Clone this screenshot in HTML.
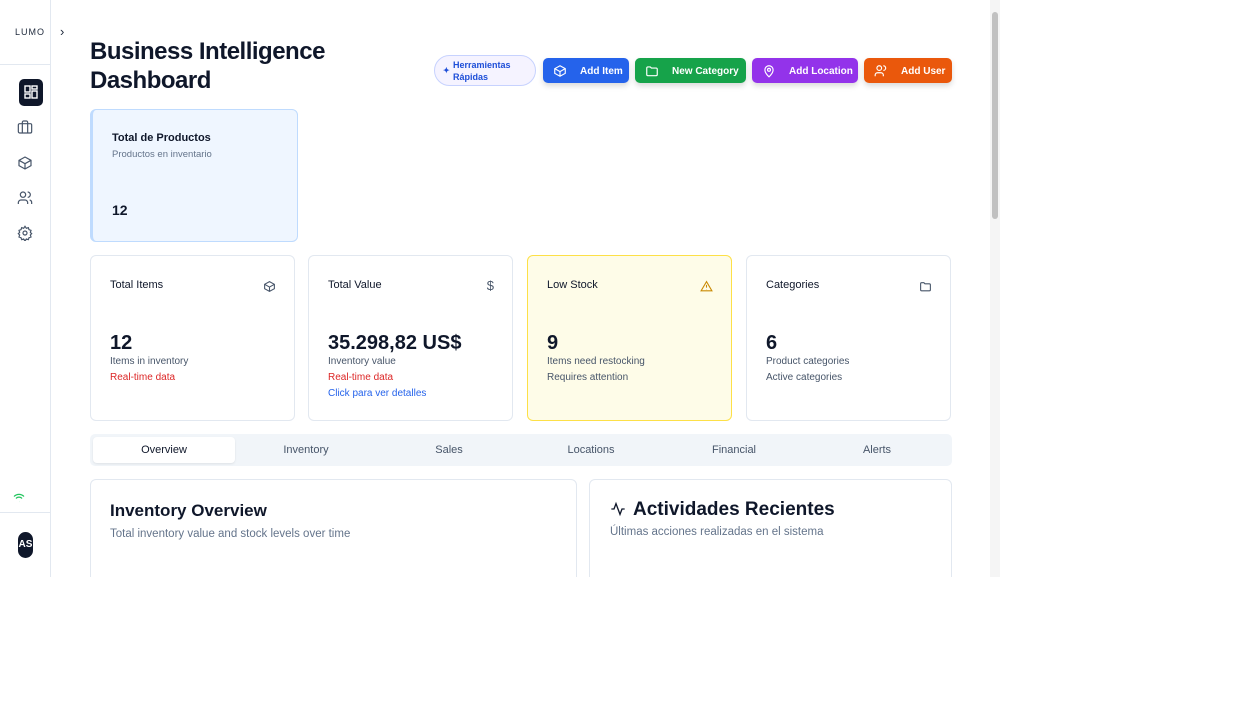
<!DOCTYPE html><html><head><style>
*{box-sizing:border-box;margin:0;padding:0}
body{width:1250px;height:721px;background:#fff;font-family:"Liberation Sans",sans-serif;position:relative;overflow:hidden;color:#0f172a}
.frame{position:absolute;left:0;top:0;width:1000px;height:577px;overflow:hidden;background:#fff}
.side{position:absolute;left:0;top:0;width:51px;height:577px;border-right:1px solid #e2e8f0}
.abs{position:absolute}
.btn{position:absolute;top:58px;height:25px;border-radius:5px;color:#fff;font-size:10px;font-weight:bold;display:flex;align-items:center;padding-top:1px;box-shadow:0 3px 6px rgba(0,0,0,.15)}
.btn svg{margin:0 13px 0 10px}
.card{position:absolute;top:255px;width:205px;height:166px;border:1px solid #e2e8f0;border-radius:6px;background:#fff}
.card .t{position:absolute;left:19px;top:23px;font-size:11px;color:#0f172a}
.card .v{position:absolute;left:19px;top:76px;font-size:20px;font-weight:bold}
.card .s{position:absolute;left:19px;font-size:10px;color:#475569}
.card .ic{position:absolute;right:18px;top:24px}
.tabs{position:absolute;left:90px;top:434px;width:862px;height:32px;background:#f1f5f9;border-radius:5px}
.tab{position:absolute;top:3px;width:142px;height:26px;font-size:11px;color:#475569;text-align:center;line-height:27px}
</style></head><body><div class="frame">
<div class="side">
<div class="abs" style="left:15px;top:27px;font-size:9px;letter-spacing:1px;color:#1e293b">LUMO</div>
<div class="abs" style="left:0;top:64px;width:51px;border-top:1px solid #e2e8f0"></div>
<div class="abs" style="left:19px;top:79px;width:24px;height:27px;background:#0f172a;border-radius:5px"><svg width="24" height="27" viewBox="0 0 24 27" fill="none" stroke="#fff" stroke-width="1.4"><rect x="6" y="7" width="5" height="6"/><rect x="13" y="7" width="5" height="3"/><rect x="13" y="12" width="5" height="7"/><rect x="6" y="15" width="5" height="4"/></svg></div>
<svg class="abs" style="left:17px;top:119px" width="16" height="16" viewBox="0 0 24 24" fill="none" stroke="#475569" stroke-width="1.8"><rect x="2" y="7" width="20" height="14" rx="2"/><path d="M16 21V5a2 2 0 0 0-2-2h-4a2 2 0 0 0-2 2v16"/></svg>
<svg class="abs" style="left:17px;top:155px" width="16" height="16" viewBox="0 0 24 24" fill="none" stroke="#475569" stroke-width="1.8"><path d="M21 8 12 3 3 8v8l9 5 9-5z M3 8l9 5 9-5 M12 13v8"/></svg>
<svg class="abs" style="left:17px;top:190px" width="16" height="16" viewBox="0 0 24 24" fill="none" stroke="#475569" stroke-width="1.8"><circle cx="9" cy="7" r="4"/><path d="M2 21v-2a4 4 0 0 1 4-4h6a4 4 0 0 1 4 4v2M16 3a4 4 0 0 1 0 8M22 21v-2a4 4 0 0 0-3-4"/></svg>
<svg class="abs" style="left:17px;top:225px" width="16" height="16" viewBox="0 0 24 24" fill="none" stroke="#475569" stroke-width="1.8"><circle cx="12" cy="12" r="3"/><path d="M12 2l2 3 3-1 1 3 3 1-1 3 2 2-2 2 1 3-3 1-1 3-3-1-2 3-2-3-3 1-1-3-3-1 1-3-2-2 2-2-1-3 3-1 1-3 3 1z"/></svg>
<svg class="abs" style="left:13px;top:493px" width="12" height="10" viewBox="0 0 12 10" fill="none" stroke="#22c55e" stroke-width="1.2"><path d="M1 3.5a7 7 0 0 1 10 0M3 5.5a4 4 0 0 1 6 0M6 8.5h.1"/></svg>
<div class="abs" style="left:0;top:512px;width:51px;border-top:1px solid #e2e8f0"></div>
<div class="abs" style="left:18px;top:532px;width:15px;height:26px;background:#0f172a;border-radius:8px;color:#fff;font-size:10px;font-weight:bold;line-height:26px;text-align:center">AS</div>
</div>
<div class="abs" style="left:60px;top:24px;font-size:13px;color:#1e293b">›</div>
<div class="abs" style="left:90px;top:37px;font-size:24px;font-weight:bold;line-height:29px;letter-spacing:-.5px">Business Intelligence<br>Dashboard</div>
<div class="abs" style="left:434px;top:55px;width:102px;height:31px;border:1px solid #c7d2fe;border-radius:16px;background:#f5f3ff;color:#1d4ed8;font-size:9px;font-weight:bold;line-height:12px;padding:3px 0 0 18px">Herramientas<br>Rápidas<span class="abs" style="left:8px;top:9px;font-size:8px">✦</span></div>
<div class="btn" style="left:543px;width:86px;background:#2563eb"><svg width="14" height="14" viewBox="0 0 24 24" fill="none" stroke="#fff" stroke-width="2"><path d="M21 8 12 3 3 8v8l9 5 9-5z M3 8l9 5 9-5 M12 13v8"/></svg>Add Item</div>
<div class="btn" style="left:635px;width:111px;background:#16a34a"><svg width="14" height="14" viewBox="0 0 24 24" fill="none" stroke="#fff" stroke-width="2"><path d="M3 7a2 2 0 0 1 2-2h4l2 2h8a2 2 0 0 1 2 2v9a2 2 0 0 1-2 2H5a2 2 0 0 1-2-2z"/></svg>New Category</div>
<div class="btn" style="left:752px;width:106px;background:#9333ea"><svg width="14" height="14" viewBox="0 0 24 24" fill="none" stroke="#fff" stroke-width="2"><path d="M12 22s7-6 7-12a7 7 0 0 0-14 0c0 6 7 12 7 12z"/><circle cx="12" cy="10" r="2.5"/></svg>Add Location</div>
<div class="btn" style="left:864px;width:88px;background:#ea580c"><svg width="14" height="14" viewBox="0 0 24 24" fill="none" stroke="#fff" stroke-width="2"><circle cx="9" cy="7" r="4"/><path d="M2 21v-2a4 4 0 0 1 4-4h6a4 4 0 0 1 4 4v2M16 3a4 4 0 0 1 0 8"/></svg>Add User</div>
<div class="abs" style="left:90px;top:109px;width:208px;height:133px;background:#eff6ff;border:1px solid #bfdbfe;border-left:3px solid #bfdbfe;border-radius:6px">
<div class="abs" style="left:19px;top:22px;font-size:11px;font-weight:bold">Total de Productos</div>
<div class="abs" style="left:19px;top:39px;font-size:9.5px;color:#64748b">Productos en inventario</div>
<div class="abs" style="left:19px;top:92px;font-size:14px;font-weight:bold">12</div></div>
<div class="card" style="left:90px"><div class="t">Total Items</div><svg class="ic" width="13" height="13" viewBox="0 0 24 24" fill="none" stroke="#475569" stroke-width="2"><path d="M21 8 12 3 3 8v8l9 5 9-5z M3 8l9 5 9-5 M12 13v8"/></svg><div class="v">12</div><div class="s" style="top:100px">Items in inventory</div><div class="s" style="top:116px;color:#dc2626">Real-time data</div></div>
<div class="card" style="left:308px"><div class="t">Total Value</div><div class="ic" style="font-size:13px;color:#475569;top:22px">$</div><div class="v">35.298,82 US$</div><div class="s" style="top:100px">Inventory value</div><div class="s" style="top:116px;color:#dc2626">Real-time data</div><div class="s" style="top:132px;color:#2563eb">Click para ver detalles</div></div>
<div class="card" style="left:527px;background:#fefce8;border-color:#fde047"><div class="t">Low Stock</div><svg class="ic" width="13" height="13" viewBox="0 0 24 24" fill="none" stroke="#ca8a04" stroke-width="2"><path d="M12 3 2 20h20z M12 9v5 M12 17v.5"/></svg><div class="v">9</div><div class="s" style="top:100px">Items need restocking</div><div class="s" style="top:116px">Requires attention</div></div>
<div class="card" style="left:746px"><div class="t">Categories</div><svg class="ic" width="13" height="13" viewBox="0 0 24 24" fill="none" stroke="#475569" stroke-width="2"><path d="M3 7a2 2 0 0 1 2-2h4l2 2h8a2 2 0 0 1 2 2v9a2 2 0 0 1-2 2H5a2 2 0 0 1-2-2z"/></svg><div class="v">6</div><div class="s" style="top:100px">Product categories</div><div class="s" style="top:116px">Active categories</div></div>
<div class="tabs"><div class="tab" style="left:3px;background:#fff;border-radius:4px;color:#0f172a;box-shadow:0 1px 2px rgba(0,0,0,.08)">Overview</div><div class="tab" style="left:145px">Inventory</div><div class="tab" style="left:288px">Sales</div><div class="tab" style="left:430px">Locations</div><div class="tab" style="left:573px">Financial</div><div class="tab" style="left:716px">Alerts</div></div>
<div class="abs" style="left:90px;top:479px;width:487px;height:120px;border:1px solid #e2e8f0;border-radius:6px"><div class="abs" style="left:19px;top:21px;font-size:17px;font-weight:bold">Inventory Overview</div><div class="abs" style="left:19px;top:48px;font-size:11.5px;color:#64748b">Total inventory value and stock levels over time</div></div>
<div class="abs" style="left:589px;top:479px;width:363px;height:120px;border:1px solid #e2e8f0;border-radius:6px"><svg class="abs" style="left:20px;top:21px" width="16" height="16" viewBox="0 0 24 24" fill="none" stroke="#0f172a" stroke-width="2"><path d="M22 12h-4l-3 8L9 4l-3 8H2"/></svg><div class="abs" style="left:43px;top:19px;font-size:19px;font-weight:bold">Actividades Recientes</div><div class="abs" style="left:20px;top:46px;font-size:11.5px;color:#64748b">Últimas acciones realizadas en el sistema</div></div>
<div class="abs" style="left:990px;top:0;width:10px;height:577px;background:#f5f5f5"><div class="abs" style="left:2px;top:12px;width:6px;height:207px;background:#c1c1c1;border-radius:3px"></div></div>
</div></body></html>
